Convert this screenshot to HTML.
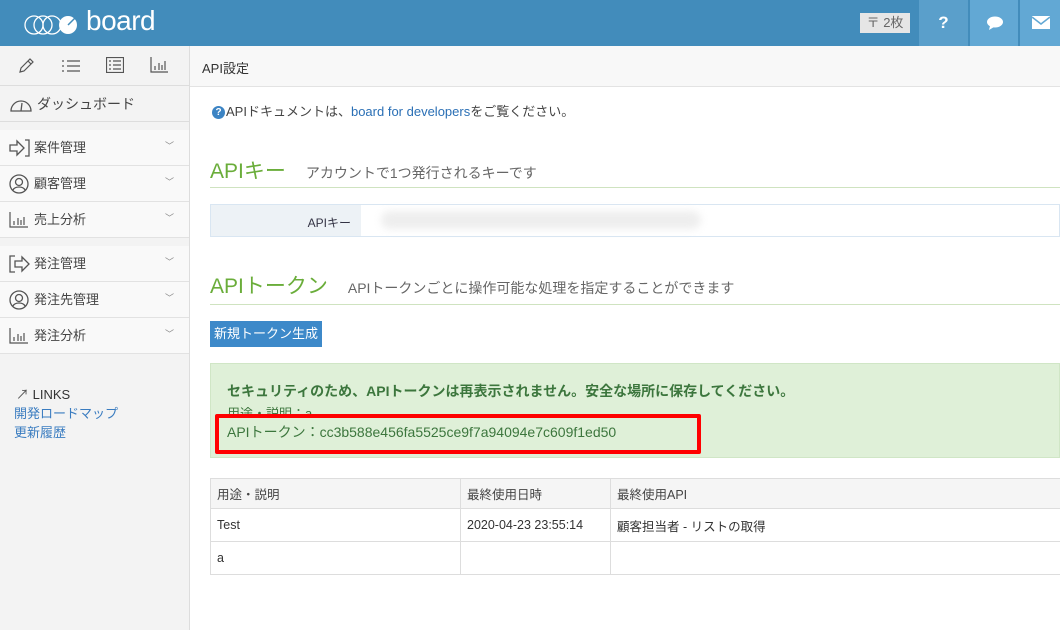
<!DOCTYPE html><html><head><meta charset="utf-8"><style>
*{box-sizing:border-box;margin:0;padding:0}
body{width:1060px;height:630px;overflow:hidden;background:#fff;font-family:"Liberation Sans","Noto Sans CJK JP",sans-serif;font-size:13px;color:#333;position:relative}
.a{position:absolute}
.top{left:0;top:0;width:1060px;height:46px;background:#428cbb}
.side{left:0;top:46px;width:190px;height:584px;background:#f3f3f3;border-right:1px solid #ddd}
.item{position:absolute;left:0;width:189px;height:36px;background:#f9f9f9;border-bottom:1px solid #e2e2e2;font-size:13px;line-height:36px;padding-left:34px;color:#444}
.item .chev{position:absolute;right:15px;top:-2px;color:#888;font-size:9px}
.item svg{position:absolute;left:9px;top:9px}
.hd{left:190px;top:46px;width:870px;height:41px;background:#f8f8f8;border-bottom:1px solid #e3e3e3;padding:12px 0 0 12px;font-size:13px}
.h2{font-size:21px;color:#6aad3a}
.sub{font-size:14px;color:#666}
table{border-collapse:collapse;position:absolute;left:210px;top:478px;width:860px;font-size:12.5px}
td,th{border:1px solid #ddd;height:33px;padding-left:6px;text-align:left;font-weight:normal}
th{background:#f5f5f5;height:30px;color:#444}
</style></head><body>
<div class="a top">
 <svg class="a" style="left:24px;top:11px" width="60" height="26" viewBox="0 0 60 26"><g fill="none" stroke="#fff" stroke-width="1.3"><circle cx="10" cy="14" r="9"/><circle cx="19" cy="14" r="9"/><circle cx="28" cy="14" r="9"/></g><circle cx="44" cy="14" r="9" fill="#fff"/><path d="M44 14 L51 7" stroke="#428cbb" stroke-width="1.5"/></svg>
 <div class="a" style="left:86px;top:5px;color:#fff;font-size:28px;letter-spacing:-0.5px">board</div>
 <div class="a" style="left:860px;top:13px;width:50px;height:20px;background:#e6e6e6;color:#666;font-size:13px;text-align:center;line-height:20px">〒 2枚</div>
 <div class="a" style="left:919px;top:0;width:49px;height:46px;background:#5a9fcb;color:#fff;font-weight:bold;font-size:17px;text-align:center;line-height:46px">?</div>
 <div class="a" style="left:970px;top:0;width:48px;height:46px;background:#62a8d4"><svg style="margin:16px 0 0 16px" width="18" height="14"><ellipse cx="9" cy="6" rx="8" ry="5.5" fill="#fff"/><path d="M4 10 L3 14 L8 11z" fill="#fff"/></svg></div>
 <div class="a" style="left:1020px;top:0;width:40px;height:46px;background:#62a8d4"><svg style="margin:16px 0 0 12px" width="18" height="14"><rect width="18" height="13" fill="#fff"/><path d="M0 1 L9 8 L18 1" stroke="#62a8d4" stroke-width="1.5" fill="none"/></svg></div>
</div>
<div class="a side">
 <div class="a" style="left:0;top:0;width:189px;height:40px;border-bottom:1px solid #ddd;color:#555;font-size:16px">
  <svg class="a" style="left:18px;top:12px" width="16" height="16" fill="none" stroke="#555" stroke-width="1.2"><path d="M2 14 L3 10 L12 1 L15 4 L6 13 Z M10 3 L13 6"/></svg>
  <svg class="a" style="left:62px;top:13px" width="18" height="14" stroke="#555" stroke-width="1.2"><path d="M0 2h2M5 2h13M0 7h2M5 7h13M0 12h2M5 12h13"/></svg>
  <svg class="a" style="left:106px;top:11px" width="18" height="16" fill="none" stroke="#555" stroke-width="1.2"><rect x=".5" y=".5" width="17" height="15"/><path d="M3 4h2M7 4h8M3 8h2M7 8h8M3 12h2M7 12h8"/></svg>
  <svg class="a" style="left:150px;top:11px" width="18" height="16" fill="none" stroke="#555" stroke-width="1.2"><path d="M1 0v15h17M5 13v-4M9 13v-7M12 13v-5M15 13v-9"/></svg>
 </div>
 <div class="item" style="top:41px;background:#f3f3f3;height:35px;padding-left:37px;font-size:14px;line-height:34px;border-bottom:1px solid #ddd"><svg width="24" height="20" fill="none" stroke="#555" stroke-width="1.3" style="left:9px;top:7px"><path d="M2 17 A10 10 0 1 1 22 17 Z"/><path d="M12 17 L13 9"/></svg>ダッシュボード</div>
 <div class="item" style="top:84px"><svg width="22" height="18" fill="none" stroke="#555" stroke-width="1.3"><path d="M1 6h7V2l7 7-7 7v-4H1z M16 1h4v16h-4"/></svg>案件管理<span class="chev">﹀</span></div>
 <div class="item" style="top:120px"><svg width="20" height="20" fill="none" stroke="#555" stroke-width="1.3" style="top:8px"><circle cx="10" cy="10" r="9"/><circle cx="10" cy="8" r="3.5"/><path d="M4 16c2-4 10-4 12 0"/></svg>顧客管理<span class="chev">﹀</span></div>
 <div class="item" style="top:156px"><svg width="20" height="18" fill="none" stroke="#555" stroke-width="1.2"><path d="M1 1v15h18M5 14v-4M9 14v-7M12 14v-5M15 14v-8"/></svg>売上分析<span class="chev">﹀</span></div>
 <div class="item" style="top:200px"><svg width="22" height="18" fill="none" stroke="#555" stroke-width="1.3"><path d="M6 1H1v16h5 M6 6h7V2l7 7-7 7v-4H6z"/></svg>発注管理<span class="chev">﹀</span></div>
 <div class="item" style="top:236px"><svg width="20" height="20" fill="none" stroke="#555" stroke-width="1.3" style="top:8px"><circle cx="10" cy="10" r="9"/><circle cx="10" cy="8" r="3.5"/><path d="M4 16c2-4 10-4 12 0"/></svg>発注先管理<span class="chev">﹀</span></div>
 <div class="item" style="top:272px"><svg width="20" height="18" fill="none" stroke="#555" stroke-width="1.2"><path d="M1 1v15h18M5 14v-4M9 14v-7M12 14v-5M15 14v-8"/></svg>発注分析<span class="chev">﹀</span></div>
 <div class="a" style="left:16px;top:339px;font-size:13px;line-height:19px"><span style="color:#555">↗</span> <span style="color:#333">LINKS</span><br><span style="color:#3a7cc0;margin-left:-2px">開発ロードマップ</span><br><span style="color:#3a7cc0;margin-left:-2px">更新履歴</span></div>
</div>
<div class="a hd">API設定</div>
<div class="a" style="left:212px;top:101px;font-size:13px;color:#444"><span style="display:inline-block;width:13px;height:13px;border-radius:50%;background:#3c84c4;color:#fff;font-size:10px;font-weight:bold;text-align:center;line-height:13px;vertical-align:middle;margin-right:1px">?</span>APIドキュメントは、<span style="color:#2a6fb5">board for developers</span>をご覧ください。</div>
<div class="a" style="left:210px;top:155px;width:850px;height:33px;border-bottom:1px solid #cfe3c0"><span class="h2">APIキー</span><span class="sub" style="margin-left:20px">アカウントで1つ発行されるキーです</span></div>
<div class="a" style="left:210px;top:204px;width:850px;height:33px;border:1px solid #d9e6f2;background:#fff"><div style="width:150px;height:31px;background:#edf2f6;font-size:12px;color:#334;text-align:right;padding:9px 10px 0 0">APIキー</div><div class="a" style="left:170px;top:6px;width:320px;height:18px;background:#eee;border-radius:9px;filter:blur(4px)"></div></div>
<div class="a" style="left:210px;top:270px;width:850px;height:35px;border-bottom:1px solid #cfe3c0"><span class="h2">APIトークン</span><span class="sub" style="margin-left:20px">APIトークンごとに操作可能な処理を指定することができます</span></div>
<div class="a" style="left:210px;top:321px;width:112px;height:26px;background:#3d89c9;color:#fff;font-size:13px;line-height:26px;text-align:center">新規トークン生成</div>
<div class="a" style="left:210px;top:363px;width:850px;height:95px;background:#dff0d8;border:1px solid #d0e6c6;color:#3c763d;padding:17px 0 0 16px">
 <div style="font-weight:bold;font-size:14px">セキュリティのため、APIトークンは再表示されません。安全な場所に保存してください。</div>
 <div style="font-size:13px;height:13px;overflow:hidden;margin-top:2px">用途・説明：a</div>
 <div style="font-size:14px;margin-top:6px">APIトークン：cc3b588e456fa5525ce9f7a94094e7c609f1ed50</div>
</div>
<div class="a" style="left:215px;top:414px;width:486px;height:40px;border:4px solid #f00;border-radius:2px"></div>
<table><tr><th style="width:250px">用途・説明</th><th style="width:150px">最終使用日時</th><th>最終使用API</th></tr>
<tr><td>Test</td><td>2020-04-23 23:55:14</td><td>顧客担当者 - リストの取得</td></tr>
<tr><td>a</td><td></td><td></td></tr></table>
</body></html>
